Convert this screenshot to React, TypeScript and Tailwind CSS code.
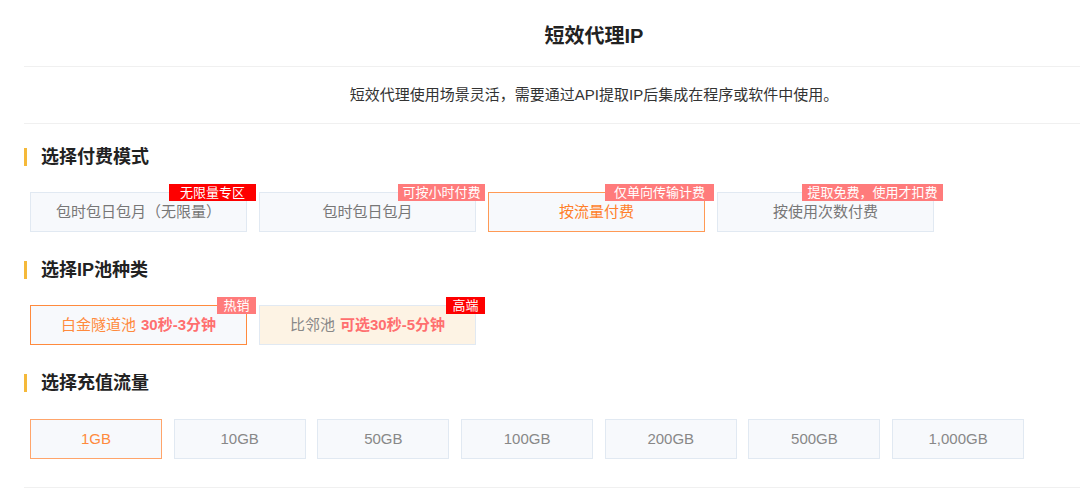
import React from "react";

const FONT = { fontFamily: '"Liberation Sans", "Noto Sans CJK SC", sans-serif' };

function Heading({ title }: { title: string }) {
  return (
    <div className="flex items-center h-[24px]">
      <div className="w-[3px] h-[18px] bg-[#f5b93a]" />
      <h2 className="ml-[14px] text-[18px] font-bold text-[#222] leading-none">{title}</h2>
    </div>
  );
}

function Tag({ text, red, w }: { text: string; red?: boolean; w: string }) {
  return (
    <span
      className={`absolute top-[-9px] right-[-10px] h-[17px] flex items-center justify-center text-[13px] leading-none text-white ${w} ${
        red ? "bg-[#fe0000]" : "bg-[#ff7b7b]"
      }`}
    >
      {text}
    </span>
  );
}

const payModes = [
  { label: "包时包日包月（无限量）", tag: "无限量专区", red: true, w: "w-[87px]" },
  { label: "包时包日包月", tag: "可按小时付费", w: "w-[87px]" },
  { label: "按流量付费", tag: "仅单向传输计费", w: "w-[109px]", active: true },
  { label: "按使用次数付费", tag: "提取免费，使用才扣费", w: "w-[141px]" },
];

const sizes = ["1GB", "10GB", "50GB", "100GB", "200GB", "500GB", "1,000GB"];

export default function App() {
  return (
    <div className="w-full h-[492px] overflow-hidden bg-white" style={FONT}>
      <div className="ml-[24px] w-[1140px]">
        <div className="h-[67px] flex items-center justify-center pt-[6px] border-b border-[#f0f0f0]">
          <h1 className="text-[20px] font-bold text-[#222]">短效代理IP</h1>
        </div>
        <div className="h-[57px] flex items-center justify-center border-b border-[#f0f0f0] text-[15px] text-[#333]">
          短效代理使用场景灵活，需要通过API提取IP后集成在程序或软件中使用。
        </div>

        <div className="mt-[21px]">
          <Heading title="选择付费模式" />
          <div className="mt-[23px] ml-[6px] flex gap-[12px]">
            {payModes.map((m) => (
              <div
                key={m.label}
                className={`relative w-[217px] h-[40px] flex items-center justify-center text-[15px] bg-[#f7f9fc] border ${
                  m.active ? "border-[#ff9a55] text-[#ff7f2a]" : "border-[#e1e9f2] text-[#777]"
                }`}
              >
                {m.label}
                <Tag text={m.tag} red={m.red} w={m.w} />
              </div>
            ))}
          </div>
        </div>

        <div className="mt-[26px]">
          <Heading title="选择IP池种类" />
          <div className="mt-[23px] ml-[6px] flex gap-[12px]">
            <div className="relative w-[217px] h-[40px] flex items-center justify-center text-[15px] bg-[#f7f9fc] border border-[#ff8a3d]">
              <span className="text-[#ff8a3d]">白金隧道池</span>
              <span className="ml-[5px] font-bold text-[#ff6f6f]">30秒-3分钟</span>
              <span className="absolute top-[-9px] right-[-10px] w-[39px] h-[17px] flex items-center justify-center text-[13px] leading-none text-white bg-[#ff7b7b]">
                热销
              </span>
            </div>
            <div className="relative w-[217px] h-[40px] flex items-center justify-center text-[15px] bg-[#fdf3e4] border border-[#e1e9f2]">
              <span className="text-[#888]">比邻池</span>
              <span className="ml-[5px] font-bold text-[#ff6f6f]">可选30秒-5分钟</span>
              <span className="absolute top-[-9px] right-[-10px] w-[39px] h-[17px] flex items-center justify-center text-[13px] leading-none text-white bg-[#fe0000]">
                高端
              </span>
            </div>
          </div>
        </div>

        <div className="mt-[26px]">
          <Heading title="选择充值流量" />
          <div className="mt-[24px] ml-[6px] flex gap-[11.7px]">
            {sizes.map((s, i) => (
              <div
                key={s}
                className={`w-[132px] h-[40px] flex items-center justify-center text-[15px] bg-[#f7f9fc] border ${
                  i === 0 ? "border-[#ffa56b] text-[#ff8a3d]" : "border-[#e1e9f2] text-[#888]"
                }`}
              >
                {s}
              </div>
            ))}
          </div>
        </div>

        <div className="mt-[28px] border-b border-[#f0f0f0]" />
      </div>
    </div>
  );
}
